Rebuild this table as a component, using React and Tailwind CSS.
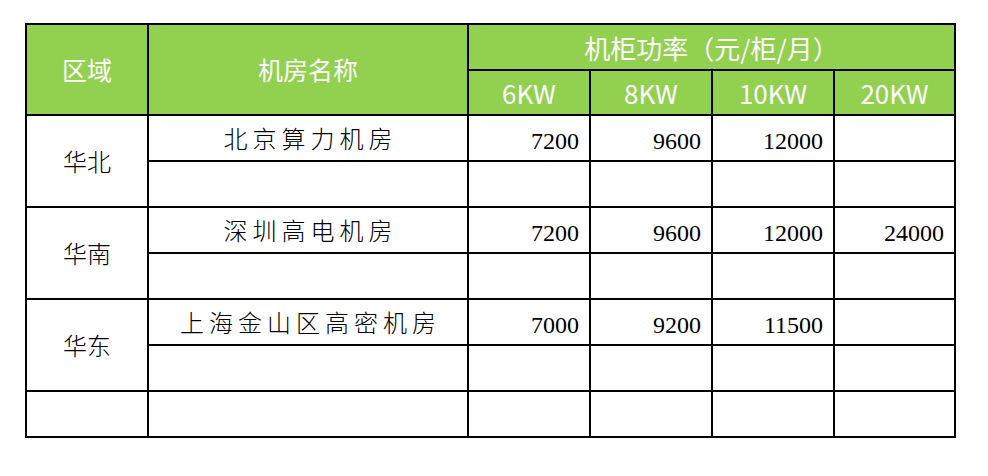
import React from "react";

const H = "flex items-center justify-center bg-[#92d050] text-white text-[25px] font-[Noto_Sans_CJK_SC,sans-serif]";
const C = "flex items-center justify-center bg-white text-black text-[24px] font-[Noto_Sans_CJK_SC,sans-serif] font-light";
const N = "flex items-center justify-end pr-[10px] pt-[5px] bg-white text-black text-[24px] font-['Liberation_Serif']";
const E = "bg-white";

function Row({ name, vals }) {
  return (
    <>
      <div className={`${C} tracking-[5px] pl-[5px]`}>{name}</div>
      {vals.map((v, i) =>
        v ? (
          <div key={i} className={N}>{v}</div>
        ) : (
          <div key={i} className={E} />
        )
      )}
    </>
  );
}

function Blank() {
  return (
    <>
      <div className={E} />
      <div className={E} />
      <div className={E} />
      <div className={E} />
      <div className={E} />
    </>
  );
}

export default function App() {
  return (
    <div className="w-[988px] h-[476px] bg-white pt-[23px] pl-[25px]">
      <div className="grid w-[931px] bg-black p-[2px] gap-[2px] grid-cols-[120px_318px_120px_120px_120px_119px] grid-rows-[44px_43px_44px_44px_44px_44px_44px_44px_44px]">
        <div className={`${H} row-span-2`}>区域</div>
        <div className={`${H} row-span-2`}>机房名称</div>
        <div className={`${H} col-span-4 text-[26px]`}>机柜功率（元/柜/月）</div>
        <div className={`${H} text-[26px]`}>6KW</div>
        <div className={`${H} text-[26px]`}>8KW</div>
        <div className={`${H} text-[26px]`}>10KW</div>
        <div className={`${H} text-[26px]`}>20KW</div>

        <div className={`${C} row-span-2`}>华北</div>
        <Row name="北京算力机房" vals={["7200", "9600", "12000", ""]} />
        <Blank />

        <div className={`${C} row-span-2`}>华南</div>
        <Row name="深圳高电机房" vals={["7200", "9600", "12000", "24000"]} />
        <Blank />

        <div className={`${C} row-span-2`}>华东</div>
        <Row name="上海金山区高密机房" vals={["7000", "9200", "11500", ""]} />
        <Blank />

        <div className={E} />
        <Blank />
      </div>
    </div>
  );
}
